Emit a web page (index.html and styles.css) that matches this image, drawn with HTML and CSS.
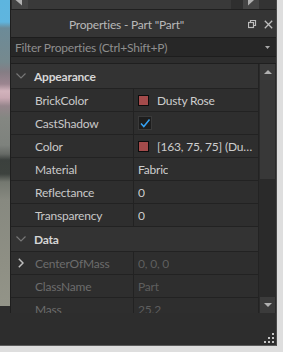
FILE: index.html
```html
<!DOCTYPE html>
<html>
<head>
<meta charset="utf-8">
<link rel="stylesheet" href="styles.css">
</head>
<body>
<div class="app">
  <div class="upper">
    <div class="viewport"></div>
    <div class="panel">
      <div class="hscroll">
        <div class="hbtn"><svg width="16" height="9" viewBox="0 0 16 9"><polygon points="3.5,0 10,0 10,5.5" fill="#b0b0b0"/></svg></div>
        <div class="htrack"></div>
        <div class="hgap"></div>
        <div class="hbtn"><svg width="16" height="9" viewBox="0 0 16 9"><polygon points="5,0 11,0 5,5.5" fill="#b0b0b0"/></svg></div>
        <div class="hcorner"></div>
      </div>
      <div class="titlebar">
        <span class="title">Properties - Part "Part"</span>
        <div class="win-icons">
          <svg width="9" height="9" viewBox="0 0 9 9"><rect x="0.5" y="2.5" width="5" height="5" fill="none" stroke="#bdbdbd" stroke-width="1.2"/><path d="M2.5 2.5V0.5H7.5V5.5H5.5" fill="none" stroke="#bdbdbd" stroke-width="1.2"/></svg>
          <svg width="9" height="9" viewBox="0 0 9 9"><path d="M0.8 0.8L8.2 8.2M8.2 0.8L0.8 8.2" stroke="#bdbdbd" stroke-width="1.3"/></svg>
        </div>
      </div>
      <div class="filter">
        <span class="filter-text">Filter Properties (Ctrl+Shift+P)</span>
        <svg width="5" height="3" viewBox="0 0 5 3"><polygon points="0,0 5,0 2.5,3" fill="#a8a8a8"/></svg>
      </div>
      <div class="props">
        <div class="grid">
          <div class="section">
            <svg class="chev-down" width="10" height="6" viewBox="0 0 10 6"><path d="M0.5 0.5L5 5L9.5 0.5" fill="none" stroke="#777" stroke-width="1.2"/></svg>
            <span class="section-name">Appearance</span>
          </div>
          <div class="row">
            <div class="name">BrickColor</div>
            <div class="value"><span class="swatch"></span><span class="vtext">Dusty Rose</span></div>
          </div>
          <div class="row">
            <div class="name">CastShadow</div>
            <div class="value"><span class="checkbox"><svg width="14" height="14" viewBox="0 0 14 14"><path d="M3 7.5L5.8 10.5L11.5 3.5" fill="none" stroke="#35a2f4" stroke-width="1.5"/></svg></span></div>
          </div>
          <div class="row">
            <div class="name">Color</div>
            <div class="value"><span class="swatch"></span><span class="vtext">[163, 75, 75] (Dusty Rose)</span></div>
          </div>
          <div class="row">
            <div class="name">Material</div>
            <div class="value"><span class="vtext">Fabric</span></div>
          </div>
          <div class="row">
            <div class="name">Reflectance</div>
            <div class="value"><span class="vtext">0</span></div>
          </div>
          <div class="row">
            <div class="name">Transparency</div>
            <div class="value"><span class="vtext">0</span></div>
          </div>
          <div class="section">
            <svg class="chev-down" width="10" height="6" viewBox="0 0 10 6"><path d="M0.5 0.5L5 5L9.5 0.5" fill="none" stroke="#777" stroke-width="1.2"/></svg>
            <span class="section-name">Data</span>
          </div>
          <div class="row dim">
            <div class="name"><svg class="chev-right" width="6" height="10" viewBox="0 0 6 10"><path d="M0.8 0.8L5 5L0.8 9.2" fill="none" stroke="#bdbdbd" stroke-width="1.5"/></svg>CenterOfMass</div>
            <div class="value"><span class="vtext">0, 0, 0</span></div>
          </div>
          <div class="row dim">
            <div class="name">ClassName</div>
            <div class="value"><span class="vtext">Part</span></div>
          </div>
          <div class="row dim">
            <div class="name">Mass</div>
            <div class="value"><span class="vtext">25.2</span></div>
          </div>
        </div>
        <div class="vscroll">
          <div class="vbtn"><svg width="8" height="4" viewBox="0 0 8 4"><polygon points="0,4 8,4 4,0" fill="#b0b0b0"/></svg></div>
          <div class="vthumb"></div>
          <div class="vtrack"></div>
          <div class="vbtn"><svg width="8" height="4" viewBox="0 0 8 4"><polygon points="0,0 8,0 4,4" fill="#b0b0b0"/></svg></div>
        </div>
      </div>
    </div>
  </div>
  <div class="footer">
    <svg width="11" height="11" viewBox="0 0 11 11" fill="#c4c4c4">
      <rect x="8" y="0" width="2" height="2"/>
      <rect x="4" y="4" width="2" height="2"/><rect x="8" y="4" width="2" height="2"/>
      <rect x="0" y="8" width="2" height="2"/><rect x="4" y="8" width="2" height="2"/><rect x="8" y="8" width="2" height="2"/>
    </svg>
  </div>
</div>
</body>
</html>
```

FILE: styles.css
```css
* { box-sizing: border-box; }
html, body { margin: 0; padding: 0; }
body {
  width: 283px;
  height: 352px;
  background: #dedede;
  overflow: hidden;
  font-family: Lato, "Liberation Sans", sans-serif;
  font-size: 12px;
  letter-spacing: -0.2px;
}
.app {
  width: 277px;
  height: 346px;
  background: #2d2d2d;
  border-right: 1px solid #4a4a4a;
  border-bottom: 1px solid #5c5c5c;
  display: flex;
  flex-direction: column;
}
.upper {
  display: flex;
  height: 313px;
}
.viewport {
  width: 10px;
  height: 306px;
  flex: none;
  background: linear-gradient(to bottom,
    #5db5df 0px, #5fb5de 22px,
    #6c8b98 28px, #76898e 62px,
    #857d84 72px, #9c8590 84px, #d2b3bc 91px, #c9a8b2 98px, #95858b 106px,
    #848782 118px, #7e827d 145px, #666a66 154px, #3b403d 160px, #3d423e 174px,
    #747870 182px, #878980 200px, #8e8f84 260px, #939488 306px);
}
.panel {
  flex: 1;
  display: flex;
  flex-direction: column;
  border-left: 1px solid #1e1e1e;
  min-width: 0;
}
.hscroll {
  display: flex;
  height: 10px;
  background: #2b2b2b;
  border-bottom: 1px solid #202020;
  padding-left: 1px;
}
.hbtn {
  width: 16px;
  flex: none;
  background: #444444;
  display: flex;
}
.htrack { flex: 1; background: #393939; }
.hgap { width: 12px; flex: none; background: #2f2f2f; }
.hcorner { width: 17px; flex: none; background: #333333; }
.titlebar {
  height: 27px;
  display: flex;
  align-items: center;
  background: #353535;
}
.title {
  flex: 1;
  text-align: center;
  color: #b9b9b9;
  padding-top: 2px;
}
.win-icons {
  width: 34px;
  display: flex;
  align-items: center;
  gap: 7px;
  padding-left: 6px;
  padding-top: 1px;
}
.filter {
  height: 20px;
  display: flex;
  align-items: center;
  justify-content: space-between;
  background: #272727;
  border-top: 1px solid #1d1d1d;
  border-bottom: 1px solid #1d1d1d;
  padding: 0 6px 0 4px;
}
.filter-text { color: #8e8e8e; }
.props {
  display: flex;
  flex: 1;
  margin-top: 6px;
  border-top: 1px solid #1f1f1f;
  min-height: 0;
}
.grid {
  flex: 1;
  overflow: hidden;
  min-width: 0;
}
.section {
  height: 25px;
  display: flex;
  align-items: center;
  background: #333333;
  border-bottom: 1px solid #222222;
}
.chev-down { margin-left: 5px; margin-right: 8px; flex: none; }
.section-name {
  font-weight: bold;
  color: #d6d6d6;
}
.row {
  height: 23px;
  display: grid;
  grid-template-columns: 123px 1fr;
  border-bottom: 1px solid #222222;
  background: #2e2e2e;
}
.name {
  border-right: 1px solid #222222;
  padding-left: 24px;
  display: flex;
  align-items: center;
  color: #c9c9c9;
  position: relative;
}
.chev-right { position: absolute; left: 7px; top: 6px; }
.value {
  display: flex;
  align-items: center;
  padding-left: 4px;
  padding-right: 4px;
  min-width: 0;
  color: #cdcdcd;
}
.vtext {
  white-space: nowrap;
  overflow: hidden;
  text-overflow: ellipsis;
  min-width: 0;
}
.swatch {
  width: 11px;
  height: 11px;
  flex: none;
  background: #a34b4b;
  border: 1px solid #0c0c0c;
  margin-right: 8px;
}
.checkbox {
  width: 14px;
  height: 14px;
  background: #1d1d1d;
  border: 1px solid #3a3a3a;
  display: flex;
  align-items: center;
  justify-content: center;
}
.checkbox svg { flex: none; }
.dim .name { color: #6c6c6c; }
.dim .value { color: #5e5e5e; }
.vscroll {
  width: 18px;
  flex: none;
  background: #2a2a2a;
  display: flex;
  flex-direction: column;
  padding: 0 1px;
  border-left: 1px solid #232323;
}
.vbtn {
  height: 16px;
  flex: none;
  background: #3b3b3b;
  display: flex;
  align-items: center;
  justify-content: center;
}
.vthumb { height: 99px; flex: none; background: #383838; }
.vtrack { flex: 1; }
.footer {
  flex: 1;
  display: flex;
  justify-content: flex-end;
  align-items: flex-end;
  padding: 0 1px 1px 0;
}
```
